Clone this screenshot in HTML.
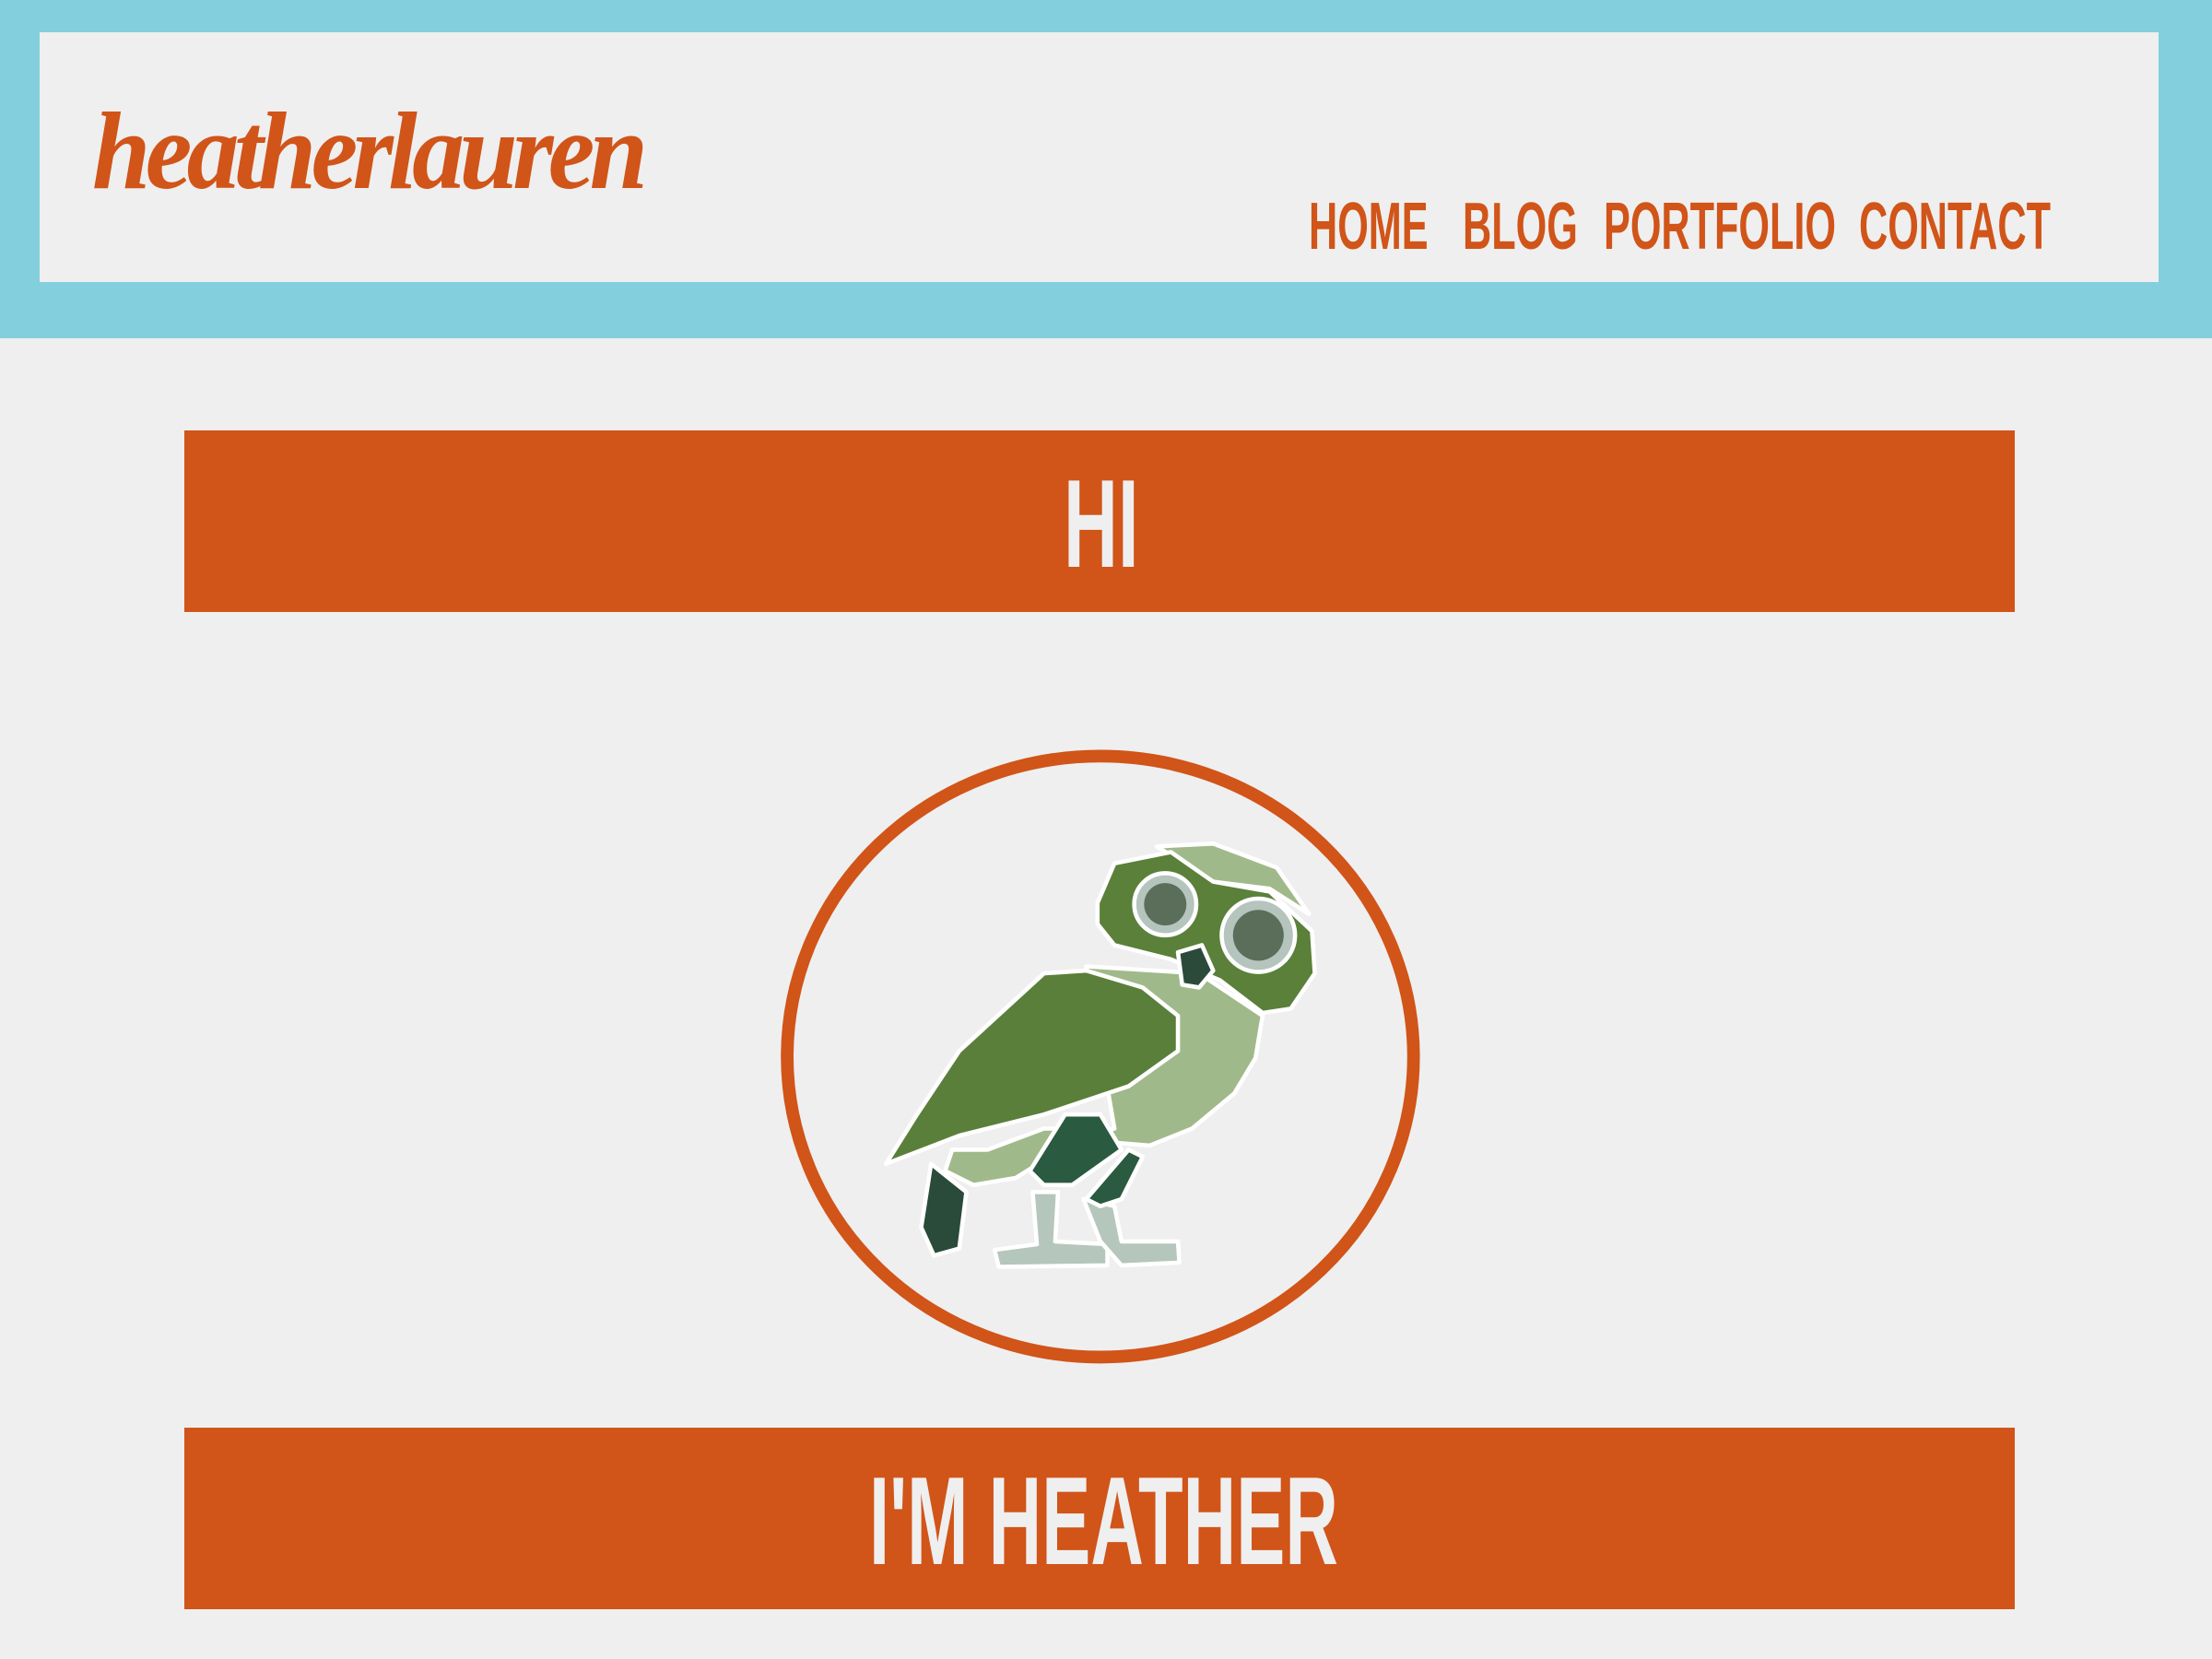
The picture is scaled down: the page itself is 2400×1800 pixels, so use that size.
<!DOCTYPE html>
<html><head><meta charset="utf-8"><style>
html,body{margin:0;padding:0;width:2400px;height:1800px;background:#efefef;overflow:hidden;position:relative}
.hdr{position:absolute;left:0;top:0;width:2400px;height:367px;background:#84cfde}
.inner{position:absolute;left:43px;top:35px;width:2299px;height:271px;background:#efefef}
.nav{position:absolute;top:206px;font:bold 72px "Liberation Sans Narrow","Liberation Sans",sans-serif;color:#d15419;transform-origin:0 0;transform:scaleX(0.6);white-space:nowrap;line-height:80px}
.bar{position:absolute;left:200px;width:1986px;height:197px;background:#d15419}
.big{position:absolute;font:bold 136px "Liberation Sans Narrow","Liberation Sans",sans-serif;color:#efefef;white-space:nowrap;line-height:140px;transform-origin:0 0}
.logo{position:absolute;left:100px;top:95px;font:italic bold 120px "Liberation Serif",serif;color:#d15419;letter-spacing:-6px;white-space:nowrap;transform-origin:0 0;transform:scaleX(0.95)}
</style></head><body>
<div class="hdr"><div class="inner"></div></div>
<div class="logo">heatherlauren</div>
<div class="nav" style="left:1420px">HOME</div>
<div class="nav" style="left:1587px">BLOG</div>
<div class="nav" style="left:1740px">PORTFOLIO</div>
<div class="nav" style="left:2017px">CONTACT</div>
<div class="bar" style="top:467px"></div>
<div class="big" style="left:1154px;top:498px;transform:scaleX(0.6)">HI</div>
<div class="bar" style="top:1549px"></div>
<div class="big" style="left:943px;top:1580px;transform:scaleX(0.586)">I'M HEATHER</div>
<svg style="position:absolute;left:0;top:0" width="2400" height="1800" viewBox="0 0 1568 1176">
<ellipse cx="780" cy="749" rx="222" ry="213" fill="none" stroke="#d15419" stroke-width="9"/>
<g stroke="#fff" stroke-width="3" stroke-linejoin="round">
<polygon fill="#a0b98a" points="770,685 850,690 895,720 890,750 875,775 845,800 815,812 790,810 765,800 740,800 700,815 675,815 670,830 690,840 720,835 760,810 790,800"/>
<polygon fill="#5a7f3a" points="628,825 650,790 680,745 740,690 770,688 810,700 835,720 835,745 800,770 740,790 680,805"/>
<polygon fill="#a0b98a" points="820,600 860,598 905,615 928,648 900,630 860,625"/>
<polygon fill="#5a803a" points="778,640 790,612 830,604 860,625 900,632 930,660 932,690 915,715 895,718 865,695 830,680 790,670 778,655"/>
<circle cx="826" cy="641" r="22" fill="#b5c4bd"/><circle cx="826" cy="641" r="15" fill="#5a6e5a" stroke="none"/>
<circle cx="892" cy="663" r="26" fill="#b5c4bd"/><circle cx="892" cy="663" r="18" fill="#5a6e5a" stroke="none"/>
<polygon fill="#2c4a3a" points="835,675 852,670 860,688 850,700 838,698"/>
<polygon fill="#2a4a3a" points="660,825 685,845 680,885 662,890 653,870"/>
<polygon fill="#b5c6bc" points="732,845 750,845 748,880 785,882 785,897 708,898 705,886 735,882"/>
<polygon fill="#b5c6bc" points="768,850 790,855 795,880 835,880 836,895 795,897 780,880"/>
<polygon fill="#2a5a40" points="730,830 755,790 780,790 795,815 760,840 740,840"/>
<polygon fill="#2a5a40" points="770,850 800,815 810,820 795,850 780,855"/>
</g>
</svg>
</body></html>
